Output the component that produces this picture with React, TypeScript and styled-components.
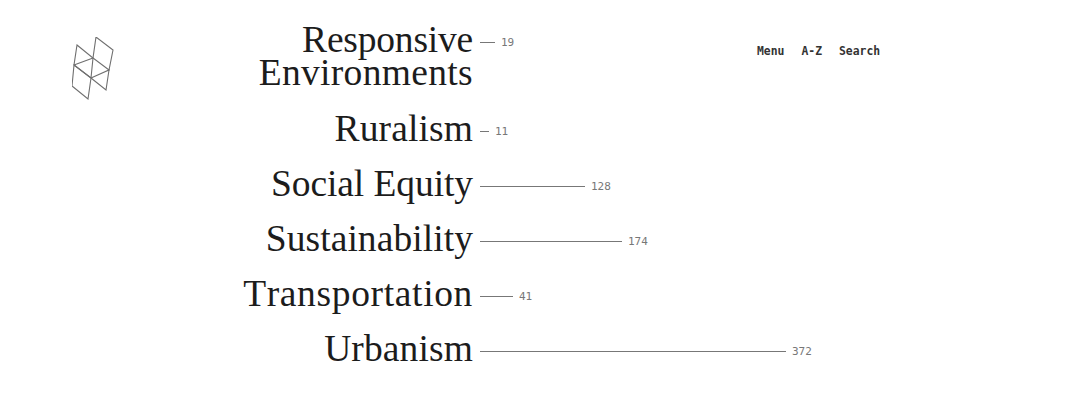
import React from "react";
import styled, { createGlobalStyle } from "styled-components";

const Global = createGlobalStyle`
  html, body { margin: 0; padding: 0; background: #fff; }
  body { overflow: hidden; }
`;

const Page = styled.div`
  display: flex;
  align-items: flex-start;
  width: 1080px;
  height: 413px;
  overflow: hidden;
  background: #fff;
`;

const LogoColumn = styled.div`
  width: 168px;
  padding: 37px 0 0 72px;
  flex: none;
`;

const List = styled.ul`
  list-style: none;
  margin: 0;
  padding: 23px 0 0;
  width: 517px;
  flex: none;
  display: flex;
  flex-direction: column;
  gap: 17px;
`;

const Row = styled.li`
  display: flex;
  align-items: flex-start;
  gap: 7px;

  &:first-child {
    margin-bottom: 6px;
  }
`;

const Label = styled.a<{ $track: number }>`
  width: 233px;
  flex: none;
  text-align: right;
  font-family: "Liberation Serif", serif;
  font-size: 37.5px;
  font-kerning: none;
  letter-spacing: ${(p) => p.$track}px;
  line-height: 33px;
  color: #1c1c1c;
`;

const Line = styled.span<{ $track: number }>`
  display: block;
  letter-spacing: ${(p) => p.$track}px;
`;

const Stat = styled.div`
  display: flex;
  align-items: center;
  gap: 6px;
  height: 38px;
`;

const Bar = styled.span<{ $w: number }>`
  display: block;
  width: ${(p) => p.$w}px;
  height: 1px;
  background: #777;
`;

const Count = styled.span`
  font-family: "DejaVu Sans Mono", monospace;
  font-size: 11px;
  color: #777;
`;

const Nav = styled.nav`
  display: flex;
  gap: 17px;
  padding-top: 45px;
`;

const NavItem = styled.a`
  font-family: "DejaVu Sans Mono", monospace;
  font-size: 11.4px;
  font-weight: 700;
  line-height: 13px;
  color: #333;
`;

const rows = [
  {
    label: (
      <>
        <Line $track={-0.2}>Responsive</Line>
        <Line $track={0.33}>Environments</Line>
      </>
    ),
    track: 0,
    count: 19,
    w: 15,
  },
  { label: "Ruralism", track: 0.12, count: 11, w: 9 },
  { label: "Social Equity", track: -0.08, count: 128, w: 105 },
  { label: "Sustainability", track: 0.07, count: 174, w: 142 },
  { label: "Transportation", track: 0.65, count: 41, w: 33 },
  { label: "Urbanism", track: 0.12, count: 372, w: 306 },
];

const Logo = () => (
  <svg width="42" height="63" viewBox="72 37 42 63" fill="none" stroke="#6f6f6f" strokeWidth="1.1" style={{ display: "block" }}>
    <path d="M96 37 L113 50 L109 70 L93 58 Z" />
    <path d="M77 45 L93 58 L91 78 L74 65 Z" />
    <path d="M74 65 L91 78 L88 99 L72 86 Z" />
    <path d="M74 65 L93 58 M91 78 L109 70 L106 90 L91 78" />
  </svg>
);

export default function App() {
  return (
    <Page>
      <Global />
      <LogoColumn>
        <Logo />
      </LogoColumn>
      <List>
        {rows.map((r) => (
          <Row key={r.count}>
            <Label $track={r.track}>{r.label}</Label>
            <Stat>
              <Bar $w={r.w} />
              <Count>{r.count}</Count>
            </Stat>
          </Row>
        ))}
      </List>
      <Nav>
        <NavItem>Menu</NavItem>
        <NavItem>A-Z</NavItem>
        <NavItem>Search</NavItem>
      </Nav>
    </Page>
  );
}
